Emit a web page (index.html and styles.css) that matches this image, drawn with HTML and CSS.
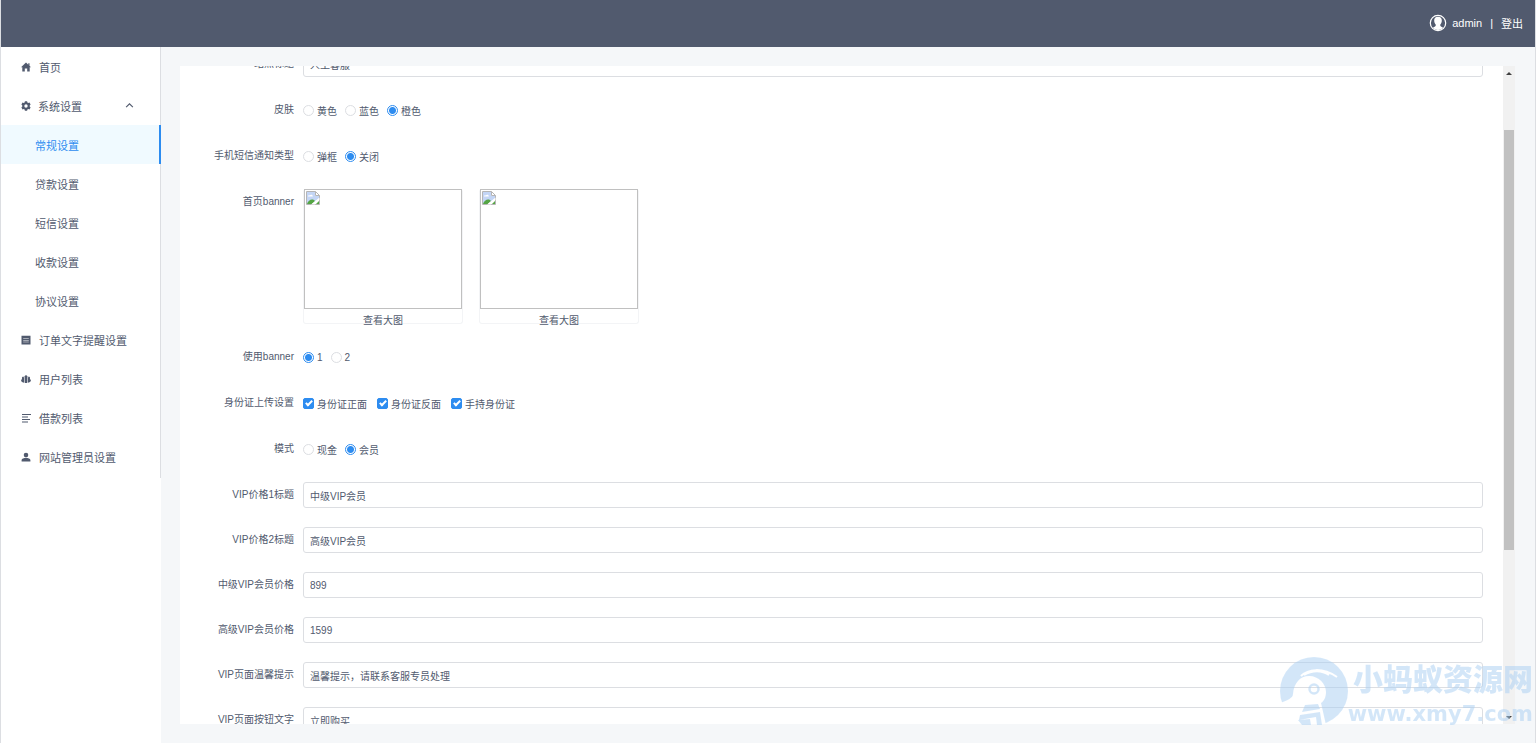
FILE: index.html
```html
<!DOCTYPE html>
<html lang="zh-CN">
<head>
  <meta charset="UTF-8" />
  <title>常规设置</title>
  <meta name="viewport" content="width=device-width, initial-scale=1.0" />
  <link rel="stylesheet" href="styles.css">
</head>
<body>
  <header class="header">
    <svg class="avatar" viewBox="0 0 18 18">
      <circle cx="9" cy="9" r="7.7" fill="none" stroke="#fff" stroke-width="1.2" />
      <path fill="#fff" d="M9 2.8c2.500 0 3.900 1.500 3.800 3.700 0 1.600-.6 3-1.500 3.900v1.400c.2.800 1.800 1 2.800 2A7 7 0 0 1 9 16a7 7 0 0 1-5.100-2.200c1-1 2.600-1.200 2.800-2v-1.400C5.800 9.500 5.200 8.100 5.200 6.500 5.100 4.300 6.500 2.800 9 2.800z" />
    </svg>
    <span>admin</span>
    <span class="divider">|</span>
    <a href="#">登出</a>
  </header>

  <div class="layout">
    <aside class="sidebar">
      <nav class="menu">
        <a href="#" class="item">
          <svg class="icon" viewBox="0 0 10 10"><path d="M5 .6 0 5.200h1.300v4.300h2.500V6.400h2.400v3.100h2.500V5.200H10L8.500 3.800V1.200H7.300v1.500z" /></svg>
          首页
        </a>
        <button type="button" class="item parent">
          <svg class="icon" viewBox="0 0 10 10"><path fill-rule="evenodd" d="M3.900.3h2.200l.3 1.300.8.4 1.300-.4 1.100 1.900-.9.900v1.200l.9.900-1.100 1.900-1.300-.4-.8.4-.3 1.300H3.900l-.3-1.300-.8-.4-1.300.4L.4 6.500l.9-.9V4.400l-.9-.9 1.100-1.900 1.300.4.800-.4zM5 3.300a1.700 1.700 0 1 0 0 3.400 1.700 1.700 0 0 0 0-3.400z" /></svg>
          系统设置
          <svg class="arrow" viewBox="0 0 8 8"><path d="M1 5.500 4 2.500l3 3" /></svg>
        </button>
        <a href="#" class="item sub active">常规设置</a>
        <a href="#" class="item sub">贷款设置</a>
        <a href="#" class="item sub">短信设置</a>
        <a href="#" class="item sub">收款设置</a>
        <a href="#" class="item sub">协议设置</a>
        <a href="#" class="item">
          <svg class="icon" viewBox="0 0 10 10"><path fill-rule="evenodd" d="M.5.800h9v8.700h-9zM2.200 3v.5h5.600V3zm0 1.900v.5h5.600v-.5zm0 1.900v.5h5.600v-.5z" /></svg>
          订单文字提醒设置
        </a>
        <a href="#" class="item">
          <svg class="icon" viewBox="0 0 10 10"><path d="M5 1.300a1.600 1.600 0 0 1 1.300 2.500L6 4.700v4.300H4V4.700L3.700 3.800A1.600 1.600 0 0 1 5 1.300zM2.400 2.400l1 2v4.300C1.500 8.500.1 7.700.1 6.500c0-.8.500-1.200 1-1.600C.6 3.600 1.200 2.400 2.400 2.400zM7.600 2.400c1.200 0 1.800 1.200 1.300 2.500.5.400 1 .8 1 1.600 0 1.200-1.400 2-3.300 2.200V4.400z" /></svg>
          用户列表
        </a>
        <a href="#" class="item">
          <svg class="icon" viewBox="0 0 10 10"><path d="M1 1h9v1H1zM1 3.500h6v1H1zM1 6h8v1H1zM1 8.500h6v1H1z" /></svg>
          借款列表
        </a>
        <a href="#" class="item">
          <svg class="icon" viewBox="0 0 10 10"><path d="M5 .8a2.300 2.300 0 1 1 0 4.600A2.300 2.300 0 0 1 5 .8zM.6 9.500V8C.6 6.700 3 6.100 5 6.100s4.400.6 4.400 1.900v1.500z" /></svg>
          网站管理员设置
        </a>
      </nav>
    </aside>

    <main class="content">
      <div class="card">
        <div class="scroll-area" id="scrollArea">
          <form class="form">
            <div class="row">
              <label class="label" for="kefu">站点标题</label>
              <input class="text" id="kefu" type="text" value="人工客服" />
            </div>
            <div class="row" role="radiogroup" aria-labelledby="skin">
              <span class="label" id="skin">皮肤</span>
              <div class="options">
                <label><input type="radio" name="skin" />黄色</label>
                <label><input type="radio" name="skin" />蓝色</label>
                <label><input type="radio" name="skin" checked />橙色</label>
              </div>
            </div>
            <div class="row" role="radiogroup" aria-labelledby="sms">
              <span class="label" id="sms">手机短信通知类型</span>
              <div class="options">
                <label><input type="radio" name="sms" />弹框</label>
                <label><input type="radio" name="sms" checked />关闭</label>
              </div>
            </div>
            <div class="row">
              <span class="label">首页banner</span>
              <div class="banners">
                <div class="banner">
                  <div class="picture">
                    <svg viewBox="0 0 16 16"><path fill="#fff" stroke="#b5b5b5" d="M1.500 1.500h9l4 4v9h-13z" /><path fill="#c3d5f5" d="M2 2h8v4h4v3l-8 5H2z" /><path fill="#fff" d="M3 6.500c0-1 1-1.500 1.800-1C5.500 4 8 4.600 7.800 6.500z" /><path fill="#55a544" d="M2 14c1-3 3-4.500 5-4.500 1.500 0 2.500.7 3 1.500L7 14z" /><path fill="#fff" d="m6 14.500 8.500-7V10L10 14.500z" /><path fill="#55a544" d="M11 14l3-3v3z" /><path fill="none" stroke="#b5b5b5" d="M10.500 1.500v4h4" /></svg>
                  </div>
                  <a href="#">查看大图</a>
                </div>
                <div class="banner">
                  <div class="picture">
                    <svg viewBox="0 0 16 16"><path fill="#fff" stroke="#b5b5b5" d="M1.500 1.500h9l4 4v9h-13z" /><path fill="#c3d5f5" d="M2 2h8v4h4v3l-8 5H2z" /><path fill="#fff" d="M3 6.500c0-1 1-1.500 1.800-1C5.500 4 8 4.600 7.800 6.500z" /><path fill="#55a544" d="M2 14c1-3 3-4.500 5-4.500 1.500 0 2.500.7 3 1.500L7 14z" /><path fill="#fff" d="m6 14.500 8.500-7V10L10 14.500z" /><path fill="#55a544" d="M11 14l3-3v3z" /><path fill="none" stroke="#b5b5b5" d="M10.500 1.500v4h4" /></svg>
                  </div>
                  <a href="#">查看大图</a>
                </div>
              </div>
            </div>
            <div class="row" role="radiogroup" aria-labelledby="useBanner">
              <span class="label" id="useBanner">使用banner</span>
              <div class="options">
                <label><input type="radio" name="banner" checked />1</label>
                <label><input type="radio" name="banner" />2</label>
              </div>
            </div>
            <div class="row" role="group" aria-labelledby="idcard">
              <span class="label" id="idcard">身份证上传设置</span>
              <div class="options checks">
                <label><input type="checkbox" checked />身份证正面</label>
                <label><input type="checkbox" checked />身份证反面</label>
                <label><input type="checkbox" checked />手持身份证</label>
              </div>
            </div>
            <div class="row" role="radiogroup" aria-labelledby="mode">
              <span class="label" id="mode">模式</span>
              <div class="options">
                <label><input type="radio" name="mode" />现金</label>
                <label><input type="radio" name="mode" checked />会员</label>
              </div>
            </div>
            <div class="vip">
              <div class="row">
                <label class="label" for="vip1">VIP价格1标题</label>
                <input class="text" id="vip1" type="text" value="中级VIP会员" />
              </div>
              <div class="row">
                <label class="label" for="vip2">VIP价格2标题</label>
                <input class="text" id="vip2" type="text" value="高级VIP会员" />
              </div>
              <div class="row">
                <label class="label" for="price1">中级VIP会员价格</label>
                <input class="text" id="price1" type="text" value="899" />
              </div>
              <div class="row">
                <label class="label" for="price2">高级VIP会员价格</label>
                <input class="text" id="price2" type="text" value="1599" />
              </div>
              <div class="row">
                <label class="label" for="tip">VIP页面温馨提示</label>
                <input class="text" id="tip" type="text" value="温馨提示，请联系客服专员处理" />
              </div>
              <div class="row">
                <label class="label" for="btnText">VIP页面按钮文字</label>
                <input class="text" id="btnText" type="text" value="立即购买" />
              </div>
            </div>
          </form>
        </div>
        <div class="scrollbar">
          <svg viewBox="0 0 12 12"><path d="M3 8l3-3 3 3z" /></svg>
          <div class="track"><div class="thumb"></div></div>
          <svg viewBox="0 0 12 12"><path d="M3 5l3 3 3-3z" /></svg>
        </div>
      </div>
    </main>
  </div>

  <div class="watermark">
    <svg viewBox="0 0 68 68">
      <mask id="ant">
        <circle cx="34" cy="34" r="34" fill="#fff" />
        <path fill="#000" d="M0 46C8 43 13 41 13 37 14 26 20 19 29 19c10 0 17 8 17 16 0 5-2 9-5 11l5 22H14C10 64 4 56 0 46z" />
        <path fill="none" stroke="#000" stroke-width="2" d="M21 19C28 12 42 10 57 20M24 18c8-5 18-5 25 0" />
        <circle cx="34" cy="32" r="4.500" fill="none" stroke="#fff" stroke-width="2.500" />
        <path fill="#fff" d="M25 48l13-1 2 5-18 3zM20 58l20-3 2 13h-5l-1-8-17 3zM18 63l12-1 1 6h-9z" />
      </mask>
      <rect width="68" height="68" mask="url(#ant)" />
    </svg>
    <div class="watermark-text">
      <div class="name">小蚂蚁资源网</div>
      <div class="url">www.xmy7.com</div>
    </div>
  </div>

  <script>
    // 表单初始滚动位置
    document.getElementById('scrollArea').scrollTop = 35;
  </script>
</body>
</html>
```

FILE: styles.css
```css
html, body {
  margin: 0;
  padding: 0;
  height: 100%;
}

body {
  display: flex;
  flex-direction: column;
  box-sizing: border-box;
  border-left: 1px solid #dcdee2;
  border-right: 1px solid #dcdee2;
  background: #f5f7f9;
  font-family: "Liberation Sans", "Noto Sans CJK SC", sans-serif;
  font-size: 10px;
  color: #515a6e;
  overflow: hidden;
}

a {
  color: inherit;
  text-decoration: none;
}

.header {
  display: flex;
  align-items: center;
  justify-content: flex-end;
  flex-shrink: 0;
  box-sizing: border-box;
  height: 47px;
  padding: 0 12px 2px 0;
  background: #515a6e;
  color: #fff;
  font-size: 11px;
}

.avatar {
  width: 18px;
  height: 18px;
  margin-right: 5px;
}

.divider {
  margin: 0 8px;
}

.layout {
  display: flex;
  flex: 1;
  min-height: 0;
}

.sidebar {
  width: 160px;
  flex-shrink: 0;
  background: #fff;
}

.menu {
  display: flex;
  flex-direction: column;
  padding-bottom: 2px;
  border-right: 1px solid #dcdee2;
}

.item {
  display: flex;
  align-items: center;
  gap: 8px;
  box-sizing: border-box;
  height: 39px;
  padding: 0 20px;
  border: 0;
  background: none;
  font-family: inherit;
  font-size: 11px;
  color: #515a6e;
}

.item.parent {
  gap: 7px;
}

.item.sub {
  padding-left: 34px;
}

.item.active {
  margin-right: -1px;
  border-right: 2px solid #2d8cf0;
  background: #f0faff;
  color: #2d8cf0;
}

.icon {
  width: 10px;
  height: 10px;
  fill: #515a6e;
}

.arrow {
  width: 9px;
  height: 9px;
  margin-left: auto;
  margin-right: 6px;
  fill: none;
  stroke: #515a6e;
}

.content {
  flex: 1;
  min-width: 0;
  padding: 19px 20px 19px 19px;
}

.card {
  display: flex;
  height: 100%;
  background: #fff;
}

.scroll-area {
  flex: 1;
  min-width: 0;
  overflow: hidden;
}

.form {
  padding: 20px 20px 60px;
}

.row {
  display: flex;
  align-items: flex-start;
  margin-bottom: 20px;
}

.vip .row {
  margin-bottom: 19px;
}

.label {
  width: 94px;
  flex-shrink: 0;
  margin-right: 9px;
  line-height: 26px;
  text-align: right;
}

.text {
  flex: 1;
  box-sizing: border-box;
  height: 26px;
  padding: 0 6px;
  border: 1px solid #dcdee2;
  border-radius: 3px;
  font-family: inherit;
  font-size: 10px;
  color: #515a6e;
}

.options {
  display: flex;
  align-items: center;
  gap: 8px;
  height: 26px;
}

.options.checks {
  gap: 10px;
}

.options label {
  display: flex;
  align-items: center;
  gap: 3px;
}

.options input {
  appearance: none;
  box-sizing: border-box;
  width: 11px;
  height: 11px;
  margin: 0;
  border: 1px solid #dcdee2;
  border-radius: 50%;
  background: #fff;
}

.options input:checked {
  border-color: #2d8cf0;
}

.options input[type="radio"]:checked {
  background: radial-gradient(circle, #2d8cf0 3px, #fff 4px);
}

.options input[type="checkbox"] {
  border-radius: 2px;
}

.options input[type="checkbox"]:checked {
  display: flex;
  justify-content: center;
  background: #2d8cf0;
}

.options input[type="checkbox"]:checked::after {
  content: "";
  width: 2px;
  height: 5px;
  border: solid #fff;
  border-width: 0 2px 2px 0;
  transform: rotate(45deg);
}

.banners {
  display: flex;
  gap: 16px;
}

.banner {
  box-sizing: border-box;
  width: 160px;
  height: 135px;
  border: 1px solid #f3f4f6;
  border-top: 0;
  border-radius: 3px;
  text-align: center;
  line-height: 24px;
}

.picture {
  box-sizing: border-box;
  height: 120px;
  border: 1px solid #c0c0c0;
  text-align: left;
}

.picture svg {
  display: block;
  width: 16px;
  height: 16px;
}

.scrollbar {
  display: flex;
  flex-direction: column;
  width: 12px;
  background: #f1f1f1;
}

.scrollbar svg {
  width: 12px;
  height: 14px;
  fill: #404040;
}

.track {
  flex: 1;
  padding: 50px 1px 0 1px;
}

.thumb {
  height: 420px;
  background: #c1c1c1;
}

.watermark {
  position: absolute;
  right: 3px;
  bottom: 13px;
  display: flex;
  align-items: flex-start;
  color: #a9cff3;
  opacity: 0.5;
  pointer-events: none;
}

.watermark svg {
  width: 68px;
  height: 68px;
  fill: #a9cff3;
}

.watermark-text {
  padding-top: 5px;
  font-weight: 900;
  text-align: right;
}

.watermark .name {
  font-size: 30px;
  line-height: 36px;
}

.watermark .url {
  font-family: "DejaVu Sans", sans-serif;
  font-size: 21px;
  line-height: 32px;
}
```
